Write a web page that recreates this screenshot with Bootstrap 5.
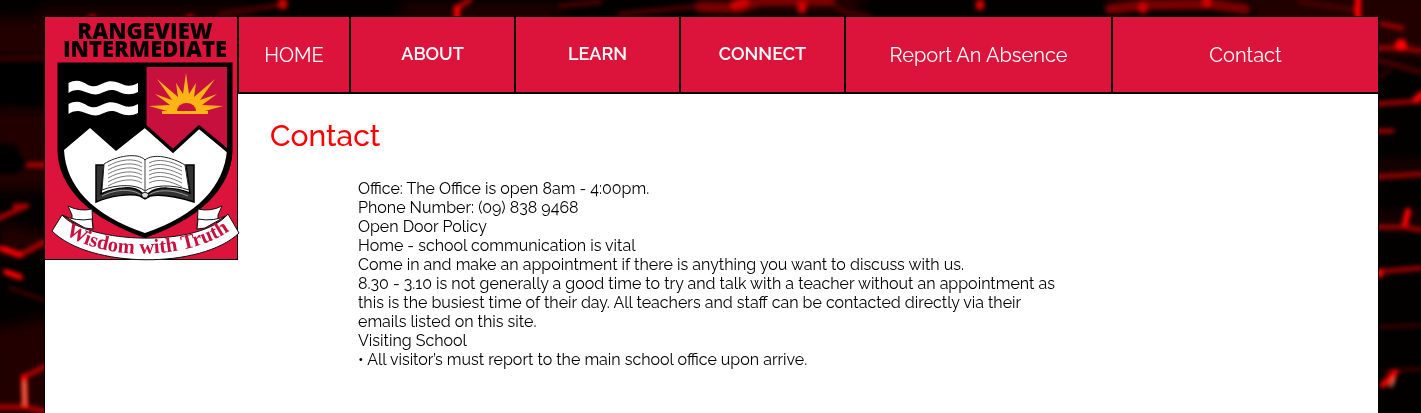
<!DOCTYPE html>
<html lang="en">
<head>
<meta charset="utf-8">
<meta name="viewport" content="width=device-width, initial-scale=1">
<title>Contact - Rangeview Intermediate</title>
<link href="https://cdn.jsdelivr.net/npm/bootstrap@5.3.0/dist/css/bootstrap.min.css" rel="stylesheet">
<style>
  body { background: #050000; color: #000; font-family: Raleway, Lato, sans-serif; }
  .backdrop { z-index: -1; }
  .site { margin: 16px 42px 0 44px; border: 1px solid #000; border-bottom: 0; }
  .crest { width: 192px; background: #dc143c; border: solid #000; border-width: 0 1px 1px 0; box-sizing: content-box; }
  .crest svg { overflow: visible; }
  .site-nav { display: grid; grid-template-columns: 110fr 163fr 163fr 163fr 265fr 265fr; gap: 2px; padding: 0 0 2px 1px; background: #000; }
  .site-nav a, .site-nav button { height: 75px; background: #dc143c; color: #fff; border: 0; border-radius: 0; padding: 0; }
  .site-nav a { font-size: 20px; line-height: 24px; }
  .site-nav button { font-size: 18px; line-height: 22px; font-weight: 600; padding-bottom: 2px; }
  .site-nav a:hover, .site-nav button:hover { background: #b30f30; }
  .page-title { color: #f00; font-size: 30px; line-height: 36px; font-weight: 500; margin: 0; padding: 24px 0 25px 32px; }
  .info { font-size: 16px; line-height: 19px; max-width: 712px; margin-left: 120px; }
</style>
</head>
<body class="min-vh-100 d-flex flex-column">
<svg class="backdrop position-fixed top-0 start-0 w-100 h-100" viewBox="0 0 1421 413" preserveAspectRatio="none" aria-hidden="true">
  <defs>
    <filter id="soft" x="-50%" y="-50%" width="200%" height="200%"><feGaussianBlur stdDeviation="7"/></filter>
    <filter id="glow" filterUnits="userSpaceOnUse" x="-20" y="-20" width="1461" height="453"><feGaussianBlur stdDeviation="2"/></filter>
  </defs>
  <rect width="1421" height="413" fill="#030000"/>
  <g filter="url(#soft)" fill="#200000">
    <path d="M-10 18H60V59H-10ZM-10 108H60V190H-10ZM-10 330L60 315V420H-10ZM0 221L50 235V250L0 255Z"/>
    <path d="M40 8H250V20H40ZM400 4H560V20H400ZM700-8H860V14H700ZM1110-8H1250V8H1110ZM1250-10H1440V60H1250Z"/>
    <path d="M1370 160H1430V176H1370ZM1370 212H1430V228H1370Z" opacity=".8"/>
  </g>
  <g filter="url(#glow)" fill="#000">
    <path d="M-10 64L50 61V106L0 104ZM-5 143L16 145L20 155L28 165L16 174H-5Z"/>
  </g>
  <g filter="url(#glow)" fill="none" stroke-linecap="round">
    <g stroke="#480000" stroke-width="5">
      <path d="M-5 59L50 58M10 288L50 302M1379 77L1390 70M1379 327L1421 325M1385 371L1421 369" stroke-width="3"/>
      <path d="M220 14L280 5M560 6L600 2M620 14L700 6M830 2L845 12L870 17M1300 2L1358 10M1376 60L1421 72"/>
      <path d="M1110 9L1145 5L1208 4L1245 9M700 7L740 8L760 1H830" stroke="#780000" stroke-width="10"/>
    </g>
    <g stroke="#b00000" stroke-width="5">
      <path d="M28 165H50M-5 220L26 206M-5 247L20 255L44 242M-5 407H24L50 412M24 377L50 364"/>
      <path d="M1375 48H1400L1421 51M1375 104L1421 101M1375 131H1392M1375 177L1421 174M1375 227H1404L1421 230M1375 272L1421 268M1382 24L1402 28" stroke="#980000"/>
      <path d="M470 0L457 8M15 206H27"/>
    </g>
    <g stroke="#f00" stroke-width="6">
      <path d="M24 377L25 405M4 249L20 255M6 272L20 277M1408 211L1405 224M1416 99L1423 93M1380 272V275M1383 385L1395 373M457 8V18M1358-5V20"/>
      <path d="M92 19V20M190 19V20M283 3V5M802 5V9M735 5L745 2M1143 7V9M1207 0V3M980 4V6" stroke="#d00000" stroke-width="9"/>
      <circle cx="1401" cy="45" r="3"/>
    </g>
    <path d="M24.500 382V404M1391 386L1394 379" stroke="#ff6a50" stroke-width="3"/>
  </g>
</svg>

<div class="site bg-white d-flex flex-grow-1 align-items-start">
  <a class="crest flex-shrink-0 d-block" href="#" aria-label="Rangeview Intermediate home">
    <svg class="d-block w-100" viewBox="45 17 192 242">
      <text font-family="'Open Sans', sans-serif" font-weight="800" font-size="22" text-anchor="middle" fill="#000"><tspan x="145" y="39">RANGEVIEW</tspan><tspan x="145" y="57">INTERMEDIATE</tspan></text>
      <path d="M57.500 62.500H232.500V152C231 188 200 219 145 238C90 219 59 188 57.500 152Z" fill="#000"/>
      <path d="M146.500 67H227V150L199 127L173 151L146.500 127Z" fill="#c8103e"/>
      <path d="M64 150L90 128L116 151L145 128L173 152L199 128L227 150C224 186 198 215 145 233C92 215 66 186 64 150Z" fill="#fff"/>
      <path d="M145 126L173 151L199 127L228 151" fill="none" stroke="#000" stroke-width="3.500"/>
      <g fill="#fff">
        <path id="wave" d="M68.500 83C76 79 82 81 88 85C95 88 99 85 105 82.500C113 79 119 83 126 85.500C131 86 135 85 138 83V92C132 95 126 95 119 92C111 88 107 91 99 94C91 96 84 90 78 90C74 90 71 91 68.500 93Z"/>
        <use href="#wave" y="21"/>
      </g>
      <path d="M149 106L170 105L155 94L172 100L157 79L178 97L176 83L183 94L186 73L189 94L196 83L194 97L215 79L200 100L217 94L202 105L223 106L205 111H208V114H162V111H167Z" fill="#fdb515"/>
      <path d="M177 111A9.500 8 0 0 1 196 111Z" fill="#c8103e"/>
      <!-- open book -->
      <path d="M96 165H104L101 194C117 186 135 186 142 193L145 198L149 193C158 186 174 187 190 193L186 165H194V202C178 197 160 194 150 196L145 199L140 196C130 193 110 196 96 202Z" fill="#333" stroke="#000" stroke-width="1.500"/>
      <path d="M104 164C116 156 138 152 145 160C153 153 172 157 185 165L189 190C172 184 153 185 145 191C137 184 117 184 102 190Z" fill="#fff" stroke="#222"/>
      <path d="M145 160V191" stroke="#444" fill="none"/>
      <g fill="none" stroke="#555" stroke-width=".8">
        <path id="ln" d="M108 166C120 159 134 158 142 163M149 163C158 158 171 161 182 167"/><use href="#ln" y="4"/><use href="#ln" y="8"/><use href="#ln" y="12"/><use href="#ln" y="16"/><use href="#ln" y="20"/>
      </g>
      <path d="M102 196C118 188 134 189 143 196M188 196C172 189 156 189 147 196" fill="none" stroke="#999"/>
      <path d="M141 194L145 192L149 194L147 198H143Z" fill="#ddd" stroke="#000"/>
      <!-- ribbon -->
      <g fill="#fff" stroke="#111" stroke-linejoin="round">
        <path d="M72 215L68 206Q80 212 92 209L93 229L72 222Z"/>
        <path d="M218 215L222 206Q210 212 198 209L197 229L218 222Z"/>
        <path d="M62 215Q76 222 92 219L93 229L85 228ZM228 215Q214 222 198 219L197 229L205 228Z"/>
        <path d="M62 215C88 244 200 248 228 214L239 233C202 269 90 269 52 231Z"/>
      </g>
      <path id="motto" d="M61 230C98 263 194 261 234 227" fill="none"/>
      <text font-family="'Liberation Serif', serif" font-weight="700" font-size="20.500" fill="#c8103e" text-anchor="middle"><textPath href="#motto" startOffset="50%">Wisdom with Truth</textPath></text>
    </svg>
  </a>
  <div class="flex-grow-1">
    <nav class="site-nav" aria-label="Main">
      <a class="d-flex align-items-center justify-content-center text-decoration-none" href="#">HOME</a>
      <button type="button">ABOUT</button>
      <button type="button">LEARN</button>
      <button type="button">CONNECT</button>
      <a class="d-flex align-items-center justify-content-center text-decoration-none" href="#">Report An Absence</a>
      <a class="d-flex align-items-center justify-content-center text-decoration-none" href="#">Contact</a>
    </nav>
    <main>
      <h1 class="page-title">Contact</h1>
      <div class="info">
        <p class="m-0">Office: The Office is open 8am - 4:00pm.</p>
        <p class="m-0">Phone Number: (09) 838 9468</p>
        <p class="m-0">Open Door Policy</p>
        <p class="m-0">Home - school communication is vital</p>
        <p class="m-0">Come in and make an appointment if there is anything you want to discuss with us.</p>
        <p class="m-0">8.30 - 3.10 is not generally a good time to try and talk with a teacher without an appointment as this is the busiest time of their day. All teachers and staff can be contacted directly via their emails listed on this site.</p>
        <p class="m-0">Visiting School</p>
        <p class="m-0">• All visitor’s must report to the main school office upon arrive.</p>
      </div>
    </main>
  </div>
</div>
<script src="https://cdn.jsdelivr.net/npm/bootstrap@5.3.0/dist/js/bootstrap.bundle.min.js"></script>
</body>
</html>
